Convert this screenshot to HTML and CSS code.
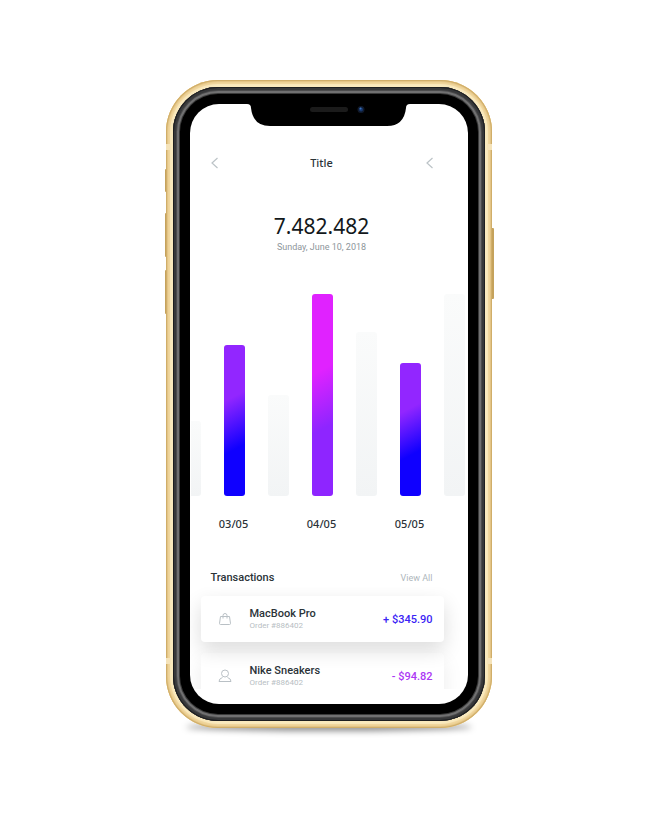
FILE: index.html
```html
<!DOCTYPE html>
<html lang="en">
<head>
<meta charset="utf-8">
<title>Transactions</title>
<link rel="stylesheet" href="styles.css">
</head>
<body>
<main class="phone">
  <span class="key key-mute"></span>
  <span class="key key-up"></span>
  <span class="key key-down"></span>
  <span class="key key-power"></span>
  <span class="band band-top"></span>
  <span class="band band-bottom"></span>
  <div class="rim">
    <div class="bezel">
      <svg class="notch" viewBox="0 0 163 22" aria-hidden="true">
        <path fill="#000" d="M0 0H163Q159 0 159 4Q157 22 140 22H23Q6 22 4 4Q4 0 0 0Z"/>
        <rect x="63" y="3" width="38" height="5" rx="2.500" fill="#1b1b1b"/>
        <circle cx="114" cy="5.500" r="3.500" fill="#111a2b"/>
        <circle cx="114" cy="5.500" r="2" fill="#17386f"/>
        <circle cx="113.500" cy="4.500" r="1" fill="#3d74bd"/>
      </svg>
      <div class="screen">
        <header class="nav">
          <button class="nav-button" aria-label="Back"><svg viewBox="0 0 8 12"><path d="M7 1L1.500 6L7 11"/></svg></button>
          <h1 class="title">Title</h1>
          <button class="nav-button" aria-label="Previous"><svg viewBox="0 0 8 12"><path d="M7 1L1.500 6L7 11"/></svg></button>
        </header>
        <section class="summary">
          <p class="total">7.482.482</p>
          <p class="date">Sunday, June 10, 2018</p>
        </section>
        <section class="chart">
          <div class="bars">
            <span class="bar" style="height:37%"></span>
            <span class="bar blue" style="height:75%"></span>
            <span class="bar" style="height:50%"></span>
            <span class="bar pink" style="height:100%"></span>
            <span class="bar" style="height:81%"></span>
            <span class="bar blue" style="height:66%"></span>
            <span class="bar" style="height:100%"></span>
          </div>
          <div class="days"><span>03/05</span><span>04/05</span><span>05/05</span></div>
        </section>
        <section class="transactions">
          <div class="heading">
            <h2>Transactions</h2>
            <a class="view-all" href="#all">View All</a>
          </div>
          <div class="cards" id="all">
            <article class="card raised">
              <svg class="icon" viewBox="0 0 14 14"><path d="M2.500 4.500H11.500L12.500 11.500Q12.500 12.500 11.500 12.500H2.500Q1.500 12.500 1.500 11.500ZM5 6.500V3.500Q5 1.500 7 1.500Q9 1.500 9 3.500V6.500"/></svg>
              <div class="item"><h3>MacBook Pro</h3><p>Order #886402</p></div>
              <strong class="amount in">+ $345.90</strong>
            </article>
            <article class="card">
              <svg class="icon" viewBox="0 0 14 14"><circle cx="7" cy="4.500" r="3.500"/><path d="M4.500 8.500Q1 9.500 1 12.500H13Q13 9.500 9.500 8.500"/></svg>
              <div class="item"><h3>Nike Sneakers</h3><p>Order #886402</p></div>
              <strong class="amount out">- $94.82</strong>
            </article>
          </div>
        </section>
      </div>
    </div>
  </div>
</main>
</body>
</html>
```
FILE: styles.css
```css
* { box-sizing: border-box; }
body {
  margin: 0;
  padding: 80px 12px 80px 0;
  background: #fff;
  color: #2b3338;
  font-family: Roboto, "Noto Sans", sans-serif;
}
h1, h2, h3, p { margin: 0; font-weight: 500; }

/* Device */
.phone {
  position: relative;
  width: 100%;
  max-width: 326px;
  margin: 0 auto;
  padding: 7px;
  border-radius: 52px;
  background: #f0d596;
  box-shadow: inset 0 0 0 1px #d0ae69, inset 0 0 1px 2px #e2c384, inset 0 0 1px 4px #efd49a, inset 0 0 0 7px #f9e9bd;
}
.phone::before {
  content: "";
  position: absolute;
  z-index: -1;
  left: 20px;
  right: 20px;
  bottom: -3px;
  height: 8px;
  border-radius: 50%;
  background: rgba(0, 0, 0, .45);
  filter: blur(3px);
}
.rim {
  padding: 8px;
  border-radius: 45px;
  background: #000;
  box-shadow: inset 0 0 0 1px #1d1e20, inset 0 0 0 3px #37383a, inset 0 0 0 4px #4c4c4d, inset 0 0 0 6px #707071, inset 0 0 0 7px #3a3a3a;
}
.bezel {
  position: relative;
  padding: 9px;
  border-radius: 38px;
  background: #000;
}
.notch {
  position: absolute;
  z-index: 2;
  top: 9px;
  left: 50%;
  width: 163px;
  height: 22px;
  margin-left: -82px;
}
.key {
  position: absolute;
  z-index: -1;
  width: 3px;
  left: -1px;
  border-radius: 1px;
  background: #c5a25c;
}
.key-mute { top: 89px; height: 23px; }
.key-up { top: 133px; height: 44px; }
.key-down { top: 190px; height: 44px; }
.key-power { top: 148px; left: auto; right: -2px; height: 71px; }
.band {
  position: absolute;
  left: 0;
  right: 0;
  height: 6px;
  border: solid #f5e3b9;
  border-width: 0 5px;
}
.band-top { top: 64px; }
.band-bottom { bottom: 64px; }

/* Screen */
.screen {
  display: flow-root;
  overflow: hidden;
  padding-bottom: 15px;
  border-radius: 29px;
  background: #fff;
}
.nav {
  display: flex;
  align-items: center;
  justify-content: space-between;
  height: 20px;
  margin: 49px 34px 0 20px;
}
.nav-button {
  display: flex;
  padding: 0;
  border: 0;
  background: none;
}
.nav-button svg {
  width: 9px;
  height: 12px;
  fill: none;
  stroke: #bcc3c7;
  stroke-width: 1.2;
}
.title { font: 500 11px/20px "Noto Sans", sans-serif; }
.summary {
  margin: 39px 14px 0 0;
  text-align: center;
}
.total { font: 400 21px/28px "Noto Sans", sans-serif; color: #12181b; }
.date { font-size: 9px; line-height: 14px; font-weight: 400; color: #8d969b; }
.chart {
  overflow: hidden;
  margin: 40px 2px 0 1px;
}
.bars {
  display: flex;
  align-items: flex-end;
  gap: 23px;
  height: 202px;
  margin-left: -11px;
}
.bar {
  flex: none;
  width: 21px;
  border-radius: 3px;
  background: linear-gradient(#fafbfb, #f2f4f5);
}
.blue { background: linear-gradient(152deg, #9226ff 35%, #0f00ff 68%); }
.pink { background: linear-gradient(152deg, #e022ff 38%, #8e25ff 66%); }
.days {
  display: grid;
  grid-template-columns: repeat(3, 88px);
  margin: 18px 0 0 -1px;
  font: 500 11px/20px "Noto Sans", sans-serif;
  text-align: center;
}
.transactions { margin-top: 35px; }
.heading {
  display: flex;
  align-items: center;
  justify-content: space-between;
  margin: 0 35px 0 21px;
}
.heading h2 { font-size: 11px; line-height: 18px; }
.view-all { color: #aeb6bb; font-size: 9px; text-decoration: none; }
.cards {
  overflow: hidden;
  height: 102px;
  padding: 9px 24px 0 11px;
}
.card {
  display: flex;
  align-items: center;
  height: 46px;
  margin-bottom: 11px;
  padding: 0 11px 0 17px;
  border-radius: 4px;
  background: #fff;
  box-shadow: 0 8px 20px rgba(0, 0, 0, .08);
}
.raised { position: relative; box-shadow: 0 8px 20px rgba(0, 0, 0, .14); }
.icon {
  width: 14px;
  height: 14px;
  fill: none;
  stroke: #b9c0c5;
}
.item { flex: 1; margin-left: 18px; }
.item h3 { font-size: 11px; line-height: 13px; }
.item p { color: #b7bec3; font-size: 8px; line-height: 11px; font-weight: 400; }
.amount { font-size: 11px; font-weight: 500; }
.in { color: #3b24f5; }
.out { color: #ac38f5; }
```
